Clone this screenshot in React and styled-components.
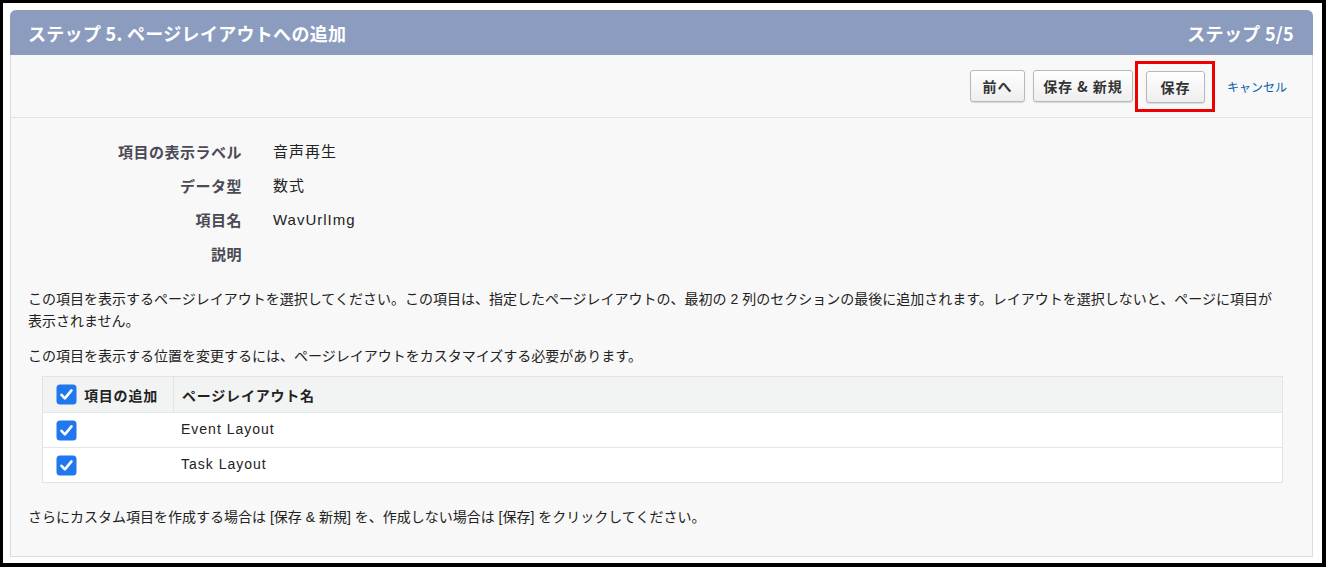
import styled, { createGlobalStyle } from 'styled-components';

const GlobalStyle = createGlobalStyle`
  html, body {
    margin: 0;
    padding: 0;
    background: #ffffff;
  }
  body {
    font-family: "Liberation Sans", "Noto Sans CJK JP", sans-serif;
    color: #222;
  }
`;

const fields = [
  { id: 1, label: '項目の表示ラベル', value: '音声再生' },
  { id: 2, label: 'データ型', value: '数式' },
  { id: 3, label: '項目名', value: 'WavUrlImg' },
  { id: 4, label: '説明', value: '' },
];

const layouts = [
  { id: 1, name: 'Event Layout' },
  { id: 2, name: 'Task Layout' },
];

const Frame = styled.div`
  box-sizing: border-box;
  width: 1326px;
  height: 567px;
  border-style: solid;
  border-color: #000;
  border-width: 3px 4px 4px 3px;
  padding: 7px 9px 0 7px;
  background: #fff;
  overflow: hidden;
`;

const Panel = styled.section`
  border: 1px solid #dcdcdc;
  border-top: none;
  border-radius: 6px 6px 0 0;
  background: #f8f8f8;
`;

const HeaderBar = styled.header`
  display: flex;
  align-items: center;
  justify-content: space-between;
  height: 45px;
  margin: 0 -1px;
  padding: 0 19px 0 18px;
  background: #8c9cbe;
  border-radius: 6px 6px 0 0;
  color: #fff;
  font-family: "Noto Sans CJK JP", sans-serif;
  font-weight: 700;
  font-size: 18px;
  letter-spacing: 0.3px;
`;

const Toolbar = styled.div`
  display: flex;
  align-items: center;
  justify-content: flex-end;
  height: 62px;
  padding-right: 25px;
  border-bottom: 1px solid #e2e2e2;
`;

const Button = styled.button`
  box-sizing: border-box;
  width: ${(p) => p.$w}px;
  height: 32px;
  margin-left: ${(p) => p.$gap || 0}px;
  padding: 0;
  border: 1px solid #b8b8b8;
  border-radius: 3px;
  background: linear-gradient(#ffffff, #eeeeee);
  box-shadow: 0 1px 1px rgba(0, 0, 0, 0.12);
  color: #333;
  font-family: "Noto Sans CJK JP", sans-serif;
  font-weight: 700;
  font-size: 14px;
  letter-spacing: 1px;
  cursor: pointer;
`;

const Highlight = styled.div`
  display: flex;
  margin-left: 2px;
  padding: 7px 7px 6px 8px;
  border: 3px solid #ee0000;
`;

const CancelLink = styled.a`
  margin-left: 12px;
  color: #0b5cad;
  font-family: "Noto Sans CJK JP", sans-serif;
  font-size: 12px;
  text-decoration: none;
`;

const Content = styled.div`
  padding: 17px 17px 28px;
`;

const FieldGrid = styled.dl`
  display: grid;
  grid-template-columns: 214px 1fr;
  column-gap: 31px;
  margin: 0;
`;

const FieldLabel = styled.dt`
  height: 34px;
  line-height: 34px;
  text-align: right;
  color: #4a4a56;
  font-family: "Noto Sans CJK JP", sans-serif;
  font-weight: 700;
  font-size: 15px;
  letter-spacing: 0.5px;
`;

const FieldValue = styled.dd`
  margin: 0;
  height: 34px;
  line-height: 34px;
  color: #222;
  font-size: 15px;
  letter-spacing: 1px;
`;

const Para = styled.p`
  margin: ${(p) => p.$top}px 0 0;
  line-height: 22px;
  font-size: 14px;
  color: #222;
`;

const Table = styled.div`
  margin: 9px 12px 0 14px;
  border: 1px solid #e1e4e6;
`;

const Row = styled.div`
  display: grid;
  grid-template-columns: 130px 1fr;
  height: ${(p) => (p.$head ? 35 : 34)}px;
  background: ${(p) => (p.$head ? '#f2f3f3' : '#fff')};
  border-top: ${(p) => (p.$head ? 'none' : '1px solid #e4e6e8')};
`;

const Cell = styled.div`
  display: flex;
  align-items: center;
  gap: 7px;
  padding-left: ${(p) => p.$pad}px;
  padding-bottom: ${(p) => (p.$head ? 0 : 3)}px;
  border-left: ${(p) => (p.$divider ? '1px solid #e1e4e6' : 'none')};
  font-family: ${(p) => (p.$head ? '"Noto Sans CJK JP", sans-serif' : 'inherit')};
  font-weight: ${(p) => (p.$head ? 700 : 400)};
  font-size: 14px;
  letter-spacing: ${(p) => (p.$head ? '0.8px' : '1px')};
  color: #222;
`;

const CheckWrap = styled.span`
  display: flex;
  margin-top: ${(p) => (p.$head ? 0 : 3)}px;
`;

const Check = ({ head }) => (
  <CheckWrap $head={head}>
    <svg width="21" height="21" viewBox="0 0 21 21">
      <rect x="0.5" y="0.5" width="20" height="20" rx="3.5" fill="#1f78ee" />
      <path d="M5.5 10.8l3.4 3.6 6.6-8" fill="none" stroke="#fff" strokeWidth="2.6" strokeLinecap="round" strokeLinejoin="round" />
    </svg>
  </CheckWrap>
);

const Footer = styled.p`
  margin: 23px 0 0;
  line-height: 22px;
  font-size: 14px;
  color: #222;
`;

const App = () => (
  <>
    <GlobalStyle />
    <Frame>
      <Panel>
        <HeaderBar>
          <span>ステップ 5. ページレイアウトへの追加</span>
          <span>ステップ 5/5</span>
        </HeaderBar>
        <Toolbar>
          <Button $w={55}>前へ</Button>
          <Button $w={100} $gap={8}>保存 &amp; 新規</Button>
          <Highlight>
            <Button $w={59}>保存</Button>
          </Highlight>
          <CancelLink href="#">キャンセル</CancelLink>
        </Toolbar>
        <Content>
          <FieldGrid>
            {fields.map((f) => [
              <FieldLabel key={`l${f.id}`}>{f.label}</FieldLabel>,
              <FieldValue key={`v${f.id}`}>{f.value}</FieldValue>,
            ])}
          </FieldGrid>
          <Para $top={17}>
            この項目を表示するページレイアウトを選択してください。この項目は、指定したページレイアウトの、最初の 2 列のセクションの最後に追加されます。レイアウトを選択しないと、ページに項目が
            <br />
            表示されません。
          </Para>
          <Para $top={13}>この項目を表示する位置を変更するには、ページレイアウトをカスタマイズする必要があります。</Para>
          <Table>
            <Row $head>
              <Cell $pad={13} $head>
                <Check head />
                項目の追加
              </Cell>
              <Cell $pad={8} $head $divider>
                ページレイアウト名
              </Cell>
            </Row>
            {layouts.map((l) => (
              <Row key={l.id}>
                <Cell $pad={13}>
                  <Check />
                </Cell>
                <Cell $pad={8}>{l.name}</Cell>
              </Row>
            ))}
          </Table>
          <Footer>
            さらにカスタム項目を作成する場合は [保存 &amp; 新規] を、作成しない場合は [保存] をクリックしてください。
          </Footer>
        </Content>
      </Panel>
    </Frame>
  </>
);

export default App;
